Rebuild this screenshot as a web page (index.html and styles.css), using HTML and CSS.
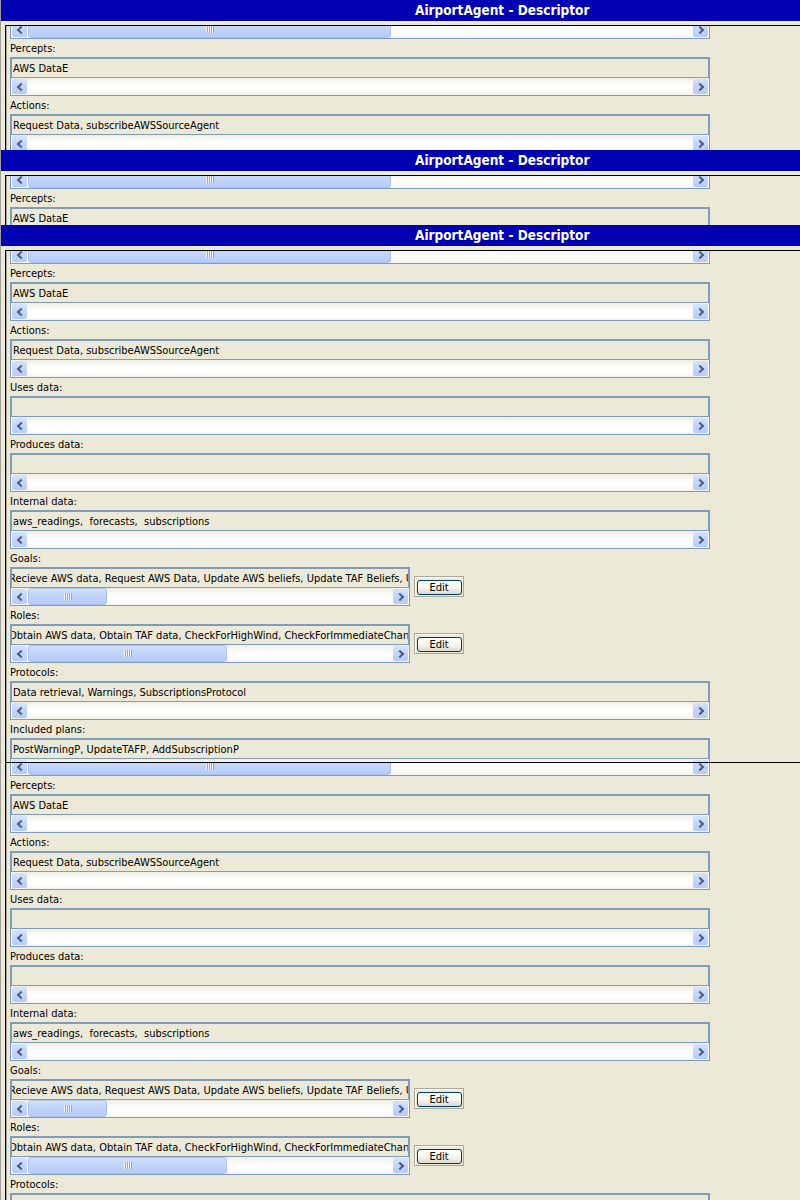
FILE: index.html
```html
<!DOCTYPE html>
<html>
<head>
<meta charset="utf-8">
<title>AirportAgent - Descriptor</title>
<link rel="stylesheet" href="styles.css">
</head>
<body>
<div class="page">

  <section class="win win-1">
    <header class="title">AirportAgent - Descriptor</header>
    <div class="viewport">
      <div class="stub"><div class="hscroll"><span class="arrow l"></span><span class="thumb t-stub"></span><span class="track"></span><span class="arrow r"></span></div></div>
      <div class="label">Percepts:</div>
      <div class="field"><div class="text">AWS DataE</div><div class="hscroll"><span class="arrow l"></span><span class="track"></span><span class="arrow r"></span></div></div>
      <div class="label">Actions:</div>
      <div class="field"><div class="text">Request Data, subscribeAWSSourceAgent</div><div class="hscroll"><span class="arrow l"></span><span class="track"></span><span class="arrow r"></span></div></div>
    </div>
  </section>

  <section class="win win-2">
    <header class="title">AirportAgent - Descriptor</header>
    <div class="viewport">
      <div class="stub"><div class="hscroll"><span class="arrow l"></span><span class="thumb t-stub"></span><span class="track"></span><span class="arrow r"></span></div></div>
      <div class="label">Percepts:</div>
      <div class="field"><div class="text">AWS DataE</div><div class="hscroll"><span class="arrow l"></span><span class="track"></span><span class="arrow r"></span></div></div>
    </div>
  </section>

  <section class="win win-3">
    <header class="title">AirportAgent - Descriptor</header>
    <div class="viewport">
      <div class="stub"><div class="hscroll"><span class="arrow l"></span><span class="thumb t-stub"></span><span class="track"></span><span class="arrow r"></span></div></div>
      <div class="label">Percepts:</div>
      <div class="field"><div class="text">AWS DataE</div><div class="hscroll"><span class="arrow l"></span><span class="track"></span><span class="arrow r"></span></div></div>
      <div class="label">Actions:</div>
      <div class="field"><div class="text">Request Data, subscribeAWSSourceAgent</div><div class="hscroll"><span class="arrow l"></span><span class="track"></span><span class="arrow r"></span></div></div>
      <div class="label">Uses data:</div>
      <div class="field"><div class="text"></div><div class="hscroll"><span class="arrow l"></span><span class="track"></span><span class="arrow r"></span></div></div>
      <div class="label">Produces data:</div>
      <div class="field"><div class="text"></div><div class="hscroll"><span class="arrow l"></span><span class="track"></span><span class="arrow r"></span></div></div>
      <div class="label">Internal data:</div>
      <div class="field"><div class="text">aws_readings,  forecasts,  subscriptions</div><div class="hscroll"><span class="arrow l"></span><span class="track"></span><span class="arrow r"></span></div></div>
      <div class="label">Goals:</div>
      <div class="row">
        <div class="field narrow"><div class="text scrolled">Recieve AWS data, Request AWS Data, Update AWS beliefs, Update TAF Beliefs, U</div><div class="hscroll"><span class="arrow l"></span><span class="thumb t-goals"></span><span class="track"></span><span class="arrow r"></span></div></div>
        <div class="editwrap"><button class="btn">Edit</button></div>
      </div>
      <div class="label">Roles:</div>
      <div class="row">
        <div class="field narrow"><div class="text scrolled">Obtain AWS data, Obtain TAF data, CheckForHighWind, CheckForImmediateChang</div><div class="hscroll"><span class="arrow l"></span><span class="thumb t-roles"></span><span class="track"></span><span class="arrow r"></span></div></div>
        <div class="editwrap"><button class="btn">Edit</button></div>
      </div>
      <div class="label">Protocols:</div>
      <div class="field"><div class="text">Data retrieval, Warnings, SubscriptionsProtocol</div><div class="hscroll"><span class="arrow l"></span><span class="track"></span><span class="arrow r"></span></div></div>
      <div class="label">Included plans:</div>
      <div class="field"><div class="text">PostWarningP, UpdateTAFP, AddSubscriptionP</div><div class="hscroll"><span class="arrow l"></span><span class="track"></span><span class="arrow r"></span></div></div>
    </div>
  </section>

  <section class="win win-4">
    <div class="viewport">
      <div class="stub"><div class="hscroll"><span class="arrow l"></span><span class="thumb t-stub"></span><span class="track"></span><span class="arrow r"></span></div></div>
      <div class="label">Percepts:</div>
      <div class="field"><div class="text">AWS DataE</div><div class="hscroll"><span class="arrow l"></span><span class="track"></span><span class="arrow r"></span></div></div>
      <div class="label">Actions:</div>
      <div class="field"><div class="text">Request Data, subscribeAWSSourceAgent</div><div class="hscroll"><span class="arrow l"></span><span class="track"></span><span class="arrow r"></span></div></div>
      <div class="label">Uses data:</div>
      <div class="field"><div class="text"></div><div class="hscroll"><span class="arrow l"></span><span class="track"></span><span class="arrow r"></span></div></div>
      <div class="label">Produces data:</div>
      <div class="field"><div class="text"></div><div class="hscroll"><span class="arrow l"></span><span class="track"></span><span class="arrow r"></span></div></div>
      <div class="label">Internal data:</div>
      <div class="field"><div class="text">aws_readings,  forecasts,  subscriptions</div><div class="hscroll"><span class="arrow l"></span><span class="track"></span><span class="arrow r"></span></div></div>
      <div class="label">Goals:</div>
      <div class="row">
        <div class="field narrow"><div class="text scrolled">Recieve AWS data, Request AWS Data, Update AWS beliefs, Update TAF Beliefs, U</div><div class="hscroll"><span class="arrow l"></span><span class="thumb t-goals"></span><span class="track"></span><span class="arrow r"></span></div></div>
        <div class="editwrap"><button class="btn">Edit</button></div>
      </div>
      <div class="label">Roles:</div>
      <div class="row">
        <div class="field narrow"><div class="text scrolled">Obtain AWS data, Obtain TAF data, CheckForHighWind, CheckForImmediateChang</div><div class="hscroll"><span class="arrow l"></span><span class="thumb t-roles"></span><span class="track"></span><span class="arrow r"></span></div></div>
        <div class="editwrap"><button class="btn">Edit</button></div>
      </div>
      <div class="label">Protocols:</div>
      <div class="field"><div class="text">Data retrieval, Warnings, SubscriptionsProtocol</div><div class="hscroll"><span class="arrow l"></span><span class="track"></span><span class="arrow r"></span></div></div>
    </div>
  </section>

</div>
</body>
</html>
```

FILE: styles.css
```css
* { box-sizing: border-box; }
html, body { margin: 0; padding: 0; }
body {
  background: #ece9d8;
  font-family: "DejaVu Sans Condensed", "DejaVu Sans", sans-serif;
  font-size: 11px;
  color: #000;
  width: 800px;
  height: 1200px;
  overflow: hidden;
}
.page {
  height: 1200px;
  border-left: 1px solid #9f9d95;
  display: flex;
  flex-direction: column;
  overflow: hidden;
}
.win {
  display: flex;
  flex-direction: column;
  overflow: hidden;
  flex: none;
}
.win-1 { height: 150px; }
.win-2 { height: 75px; }
.win-3 { height: 537px; }
.win-4 { flex: 1; min-height: 0; }

.title {
  flex: none;
  height: 21px;
  line-height: 21px;
  background: #0000b2;
  color: #fff;
  font-weight: bold;
  font-size: 13.5px;
  padding-left: 414px;
  margin-bottom: 4px;
  white-space: nowrap;
}
.viewport {
  flex: 1;
  min-height: 0;
  margin-left: 4px;
  border-top: 1px solid #000;
  border-left: 1px solid #000;
  box-shadow: inset 1px 0 0 #aca899;
  padding-left: 4px;
  overflow: hidden;
}
.stub {
  width: 700px;
  height: 13px;
  overflow: hidden;
  border: 1px solid #7f9db9;
  border-top: 0;
}
.stub .hscroll { margin-top: -5px; }

.label {
  height: 18px;
  padding-top: 1px;
  line-height: 18px;
  white-space: nowrap;
}
.field {
  width: 700px;
  border: 1px solid #7f9db9;
  flex: none;
}
.field.narrow { width: 400px; }
.text {
  height: 20px;
  border: 1px solid #7f9db9;
  padding-top: 1px;
  line-height: 18px;
  padding-left: 1px;
  white-space: pre;
  overflow: hidden;
}
.text.scrolled { padding-left: 0; text-indent: -3px; }

.hscroll {
  height: 17px;
  display: flex;
  background: linear-gradient(#eeede6 0, #f8f8f4 25%, #ffffff 55%, #fbfbf9 85%, #f1f0ea 100%);
}
.track { flex: 1; }
.arrow {
  flex: none;
  width: 17px;
  height: 17px;
  border: 1px solid transparent;
  border-radius: 3px;
  background: linear-gradient(#d5e2fe, #c4d5fc 50%, #b7cbf8) padding-box;
  display: flex;
  align-items: center;
  justify-content: center;
}
.arrow::before {
  content: "";
  width: 4px;
  height: 4px;
  border-style: solid;
  border-color: #4d6185;
}
.arrow.l::before {
  border-width: 0 0 2px 2px;
  transform: translateX(1px) rotate(45deg);
}
.arrow.r::before {
  border-width: 2px 2px 0 0;
  transform: translateX(-1px) rotate(45deg);
}
.thumb {
  flex: none;
  height: 17px;
  border: 1px solid #a9c0f4;
  border-radius: 3px;
  background: linear-gradient(#d4e1fe, #c1d4fb 45%, #b6cbf8);
  display: flex;
  align-items: center;
  justify-content: center;
}
.thumb::before {
  content: "";
  width: 8px;
  height: 7px;
  background: repeating-linear-gradient(90deg, #eef3ff 0 1px, #8aa9ea 1px 2px);
}
.t-stub { width: 363px; }
.t-goals { width: 79px; }
.t-roles { width: 199px; }

.row {
  display: flex;
  align-items: center;
  gap: 4px;
}
.editwrap {
  width: 50px;
  height: 21px;
  border: 1px solid #aca899;
  box-shadow: inset 1px 1px 0 #fff;
  display: flex;
  align-items: center;
  justify-content: center;
  padding-top: 1px;
}
.btn {
  width: 45px;
  height: 15px;
  margin: 0;
  padding: 0;
  border: 1px solid #003c74;
  border-radius: 3px;
  background: linear-gradient(#ffffff, #f5f4ef 55%, #dcd8cc);
  font-family: "DejaVu Sans Condensed", "DejaVu Sans", sans-serif;
  font-size: 11px;
  line-height: 13px;
  color: #000;
  text-align: center;
}
```
